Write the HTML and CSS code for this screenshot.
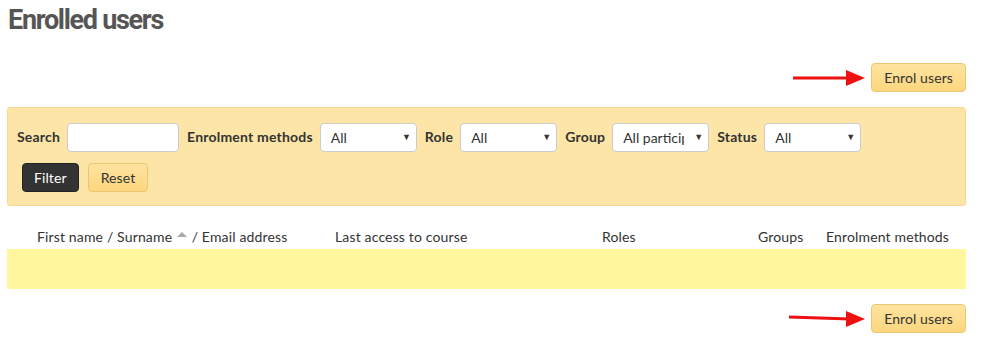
FILE: index.html
```html
<!DOCTYPE html>
<html lang="en">
<head>
    <meta charset="UTF-8">
    <meta name="viewport" content="width=device-width, initial-scale=1.0">
    <title>Enrolled users</title>
    <link rel="stylesheet" href="styles.css">
</head>
<body>
    <div class="page">
        <h2 class="page-title">Enrolled users</h2>

        <div class="enrol-bar top">
            <svg class="arrow" width="76" height="20" viewBox="0 0 76 20">
                <line x1="1" y1="10" x2="58" y2="10" stroke="#ee1111" stroke-width="3"/>
                <polygon points="54,2 73,10 54,18" fill="#ee1111"/>
            </svg>
            <button class="btn">Enrol users</button>
        </div>

        <form class="filters" onsubmit="return false">
            <div class="filter-row">
                <label>Search</label>
                <input type="text" class="search-box">
                <label>Enrolment methods</label>
                <span class="select-wrap"><select><option>All</option></select><span class="caret">▼</span></span>
                <label>Role</label>
                <span class="select-wrap"><select><option>All</option></select><span class="caret">▼</span></span>
                <label>Group</label>
                <span class="select-wrap"><select><option>All participants</option></select><span class="caret">▼</span></span>
                <label>Status</label>
                <span class="select-wrap"><select><option>All</option></select><span class="caret">▼</span></span>
            </div>
            <div class="filter-row actions">
                <button class="btn btn-dark">Filter</button>
                <button class="btn">Reset</button>
            </div>
        </form>

        <table class="users">
            <thead>
                <tr>
                    <th class="c0"></th>
                    <th class="c1">First name / Surname <span class="sort"></span> / Email address</th>
                    <th class="c2">Last access to course</th>
                    <th class="c3">Roles</th>
                    <th class="c4">Groups</th>
                    <th class="c5">Enrolment methods</th>
                </tr>
            </thead>
            <tbody>
                <tr class="empty"><td colspan="6"></td></tr>
            </tbody>
        </table>

        <div class="enrol-bar bottom">
            <svg class="arrow" width="80" height="20" viewBox="0 0 80 20">
                <line x1="1" y1="8" x2="62" y2="10" stroke="#ee1111" stroke-width="3"/>
                <polygon points="58,2 77,10 58,18" fill="#ee1111"/>
            </svg>
            <button class="btn">Enrol users</button>
        </div>
    </div>
</body>
</html>
```

FILE: styles.css
```css
body {
    margin: 0;
    font-family: Lato, "Open Sans", sans-serif;
    font-size: 14px;
    color: #333;
}

.page {
    width: 959px;
    margin-left: 7px;
}

.page-title {
    margin: 0;
    padding-left: 1px;
    height: 40px;
    line-height: 40px;
    font-family: "Liberation Sans Narrow", Roboto, sans-serif;
    font-size: 27px;
    font-weight: bold;
    color: #555;
    letter-spacing: -1.3px;
}

.enrol-bar {
    display: flex;
    justify-content: flex-end;
    align-items: center;
    gap: 3px;
}

.enrol-bar.top {
    margin-top: 23px;
}

.enrol-bar.bottom {
    margin-top: 15px;
}

.btn {
    height: 29px;
    padding: 0 12px;
    font-family: inherit;
    font-size: 14px;
    letter-spacing: 0.1px;
    color: #333;
    background: linear-gradient(#fee4a0, #fdd67e);
    border: 1px solid #e8c875;
    border-radius: 4px;
    cursor: pointer;
}

.btn-dark {
    padding: 0 11px;
    background: #333;
    border-color: #222;
    color: #fff;
}

.filters {
    margin: 15px 0 0;
    padding: 15px 9px 13px;
    background: #fde5a7;
    border: 1px solid #f7d990;
    border-radius: 3px;
}

.filter-row {
    display: flex;
    align-items: center;
    gap: 7px;
}

.filter-row label {
    font-weight: bold;
    letter-spacing: 0.2px;
    position: relative;
    top: -1px;
}

.filter-row.actions {
    margin-top: 11px;
    padding-left: 5px;
    gap: 9px;
}

.search-box {
    width: 112px;
    height: 29px;
    box-sizing: border-box;
    border: 1px solid #ccc;
    border-radius: 4px;
    background: #fff;
    margin-right: 1px;
}

.select-wrap {
    position: relative;
    display: inline-block;
    margin-right: 1px;
}

.select-wrap select {
    appearance: none;
    -webkit-appearance: none;
    width: 97px;
    height: 29px;
    padding: 0 24px 0 10px;
    font-family: inherit;
    font-size: 14px;
    color: #333;
    background: #fff;
    border: 1px solid #ccc;
    border-radius: 4px;
    overflow: hidden;
}

.caret {
    position: absolute;
    right: 6px;
    top: 8px;
    font-size: 9px;
    color: #333;
    pointer-events: none;
}

.users {
    width: 959px;
    margin-top: 7px;
    border-collapse: collapse;
    table-layout: fixed;
}

.users th {
    height: 36px;
    padding: 0 8px;
    text-align: left;
    font-weight: normal;
    letter-spacing: 0.15px;
    vertical-align: bottom;
    padding-bottom: 4px;
    box-sizing: border-box;
    white-space: nowrap;
}

.users .c0 { width: 22px; padding: 0; }
.users .c1 { width: 298px; }
.users .c2 { width: 267px; }
.users .c3 { width: 156px; }
.users .c4 { width: 68px; }

.sort {
    display: inline-block;
    width: 0;
    height: 0;
    margin: 0 1px;
    border-left: 5px solid transparent;
    border-right: 5px solid transparent;
    border-bottom: 5px solid #aaa;
    vertical-align: 5px;
}

.users .empty td {
    height: 40px;
    padding: 0;
    background: #fff69e;
}
```
